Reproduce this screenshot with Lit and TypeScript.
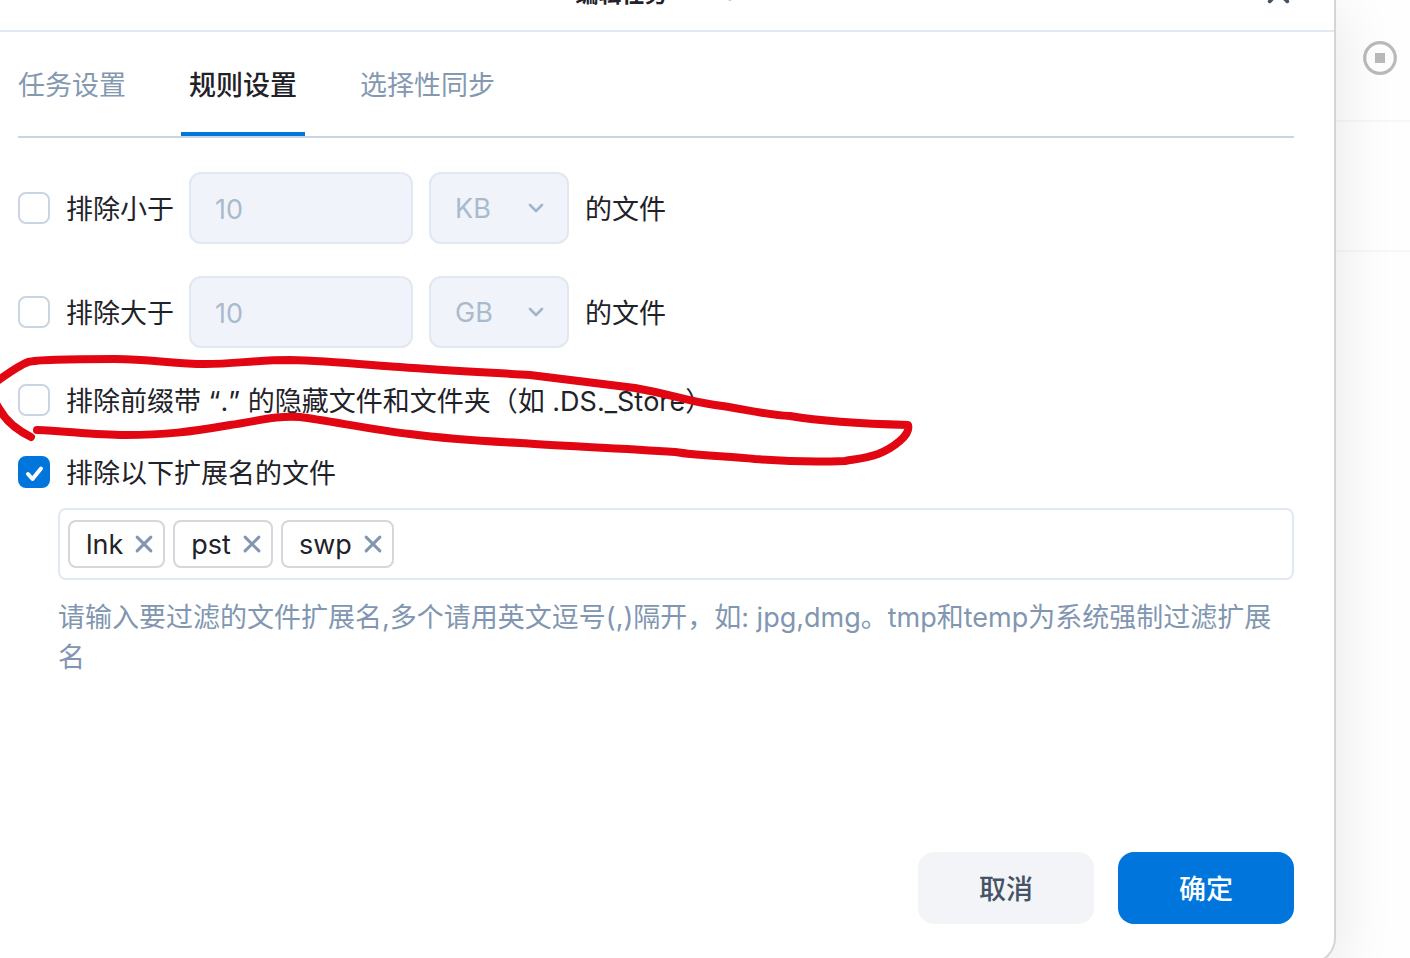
import { LitElement, html, css, svg } from "lit";
import { customElement, state } from "lit/decorators.js";

interface SizeRule {
  id: string;
  label: string;
  unit: string;
}

const SIZE_RULES: SizeRule[] = [
  { id: "min-size", label: "排除小于", unit: "KB" },
  { id: "max-size", label: "排除大于", unit: "GB" },
];

const TABS = ["任务设置", "规则设置", "选择性同步"];

const cross = svg`<path d="M2 2 L15 15 M15 2 L2 15" />`;

@customElement("app-root")
export class AppRoot extends LitElement {
  @state() private activeTab = 1;
  @state() private extensions = ["lnk", "pst", "swp"];

  static styles = css`
    :host {
      display: block;
      height: 100vh;
      overflow: hidden;
      background: #fff;
      color: #1f2329;
      font: 400 27px/40px Inter, "Noto Sans CJK SC", sans-serif;
    }
    * {
      box-sizing: border-box;
    }
    button,
    input,
    select {
      font: inherit;
      color: inherit;
      margin: 0;
    }
    button {
      border: 0;
      padding: 0;
      background: none;
      cursor: pointer;
    }
    .page {
      display: grid;
      grid-template-columns: 1fr 74px;
    }
    .dialog {
      position: relative;
      z-index: 1;
      display: flex;
      flex-direction: column;
      min-height: calc(100vh + 6px);
      background: #fff;
      border-right: 2px solid #d4d5d6;
      border-bottom: 2px solid #d4d5d6;
      border-bottom-right-radius: 26px;
      box-shadow: 0 10px 60px rgba(0, 0, 0, 0.1);
    }
    .header {
      display: flex;
      align-items: flex-end;
      height: 32px;
      padding: 0 44px 20px 40px;
      border-bottom: 2px solid #e3e9f4;
      overflow: hidden;
    }
    .title {
      flex: 1;
      display: flex;
      justify-content: center;
      align-items: flex-end;
      gap: 60px;
      margin: 0;
      font-size: 23px;
      line-height: 32px;
      font-weight: 700;
    }
    .dot {
      width: 4px;
      height: 4px;
      margin-bottom: 9px;
      border-radius: 2px;
      background: #c5c7ca;
    }
    .close {
      display: flex;
      margin-bottom: 6px;
    }
    .close svg {
      width: 23px;
      height: 23px;
      fill: none;
      stroke: #465266;
      stroke-width: 2.8;
      stroke-linecap: round;
    }
    .body {
      flex: 1;
      display: flex;
      flex-direction: column;
      padding: 0 40px 0 18px;
    }
    .tabs {
      display: flex;
      gap: 47px;
      height: 106px;
      border-bottom: 2px solid #c9d5e2;
    }
    .tab {
      padding: 8px 8px 0;
      border-bottom: 4px solid transparent;
      color: #8498b0;
    }
    .tab:first-child {
      margin-left: -8px;
    }
    .tab.active {
      border-bottom-color: #0076dd;
      color: #1f2329;
      font-weight: 500;
    }
    .rules {
      display: flex;
      flex-direction: column;
      gap: 32px;
      padding-top: 34px;
    }
    .size-rule {
      display: grid;
      grid-template-columns: 155px 224px 140px 1fr;
      align-items: center;
      gap: 16px;
    }
    .check {
      display: flex;
      align-items: center;
      gap: 16px;
      height: 40px;
      white-space: nowrap;
    }
    .text {
      padding-top: 3px;
      font-kerning: none;
      font-feature-settings: "calt" 0;
    }
    .box {
      position: relative;
      display: flex;
      width: 32px;
      height: 32px;
    }
    .box input {
      appearance: none;
      width: 32px;
      height: 32px;
      border: 2px solid #cad5e2;
      border-radius: 8px;
      background: #fff;
    }
    .box input:checked {
      border-color: #0076dd;
      background: #0076dd;
    }
    .box svg {
      position: absolute;
      inset: 0;
      width: 32px;
      height: 32px;
      fill: none;
      stroke: #fff;
      stroke-width: 4;
      stroke-linecap: round;
      stroke-linejoin: round;
      pointer-events: none;
      visibility: hidden;
    }
    .box input:checked + svg {
      visibility: visible;
    }
    .field {
      width: 100%;
      height: 72px;
      padding: 2px 24px 0;
      border: 2px solid #e1e8f1;
      border-radius: 12px;
      background: #f0f3f9;
      color: #a9bacd;
      opacity: 1;
      appearance: none;
    }
    .field::placeholder {
      color: #a9bacd;
      opacity: 1;
    }
    .select {
      position: relative;
    }
    .select .field {
      display: block;
    }
    .select svg {
      position: absolute;
      right: 25px;
      top: 30px;
      width: 16px;
      height: 12px;
      fill: none;
      stroke: #a3b5ca;
      stroke-width: 2.6;
      stroke-linecap: round;
      stroke-linejoin: round;
      pointer-events: none;
    }
    .flags {
      display: flex;
      flex-direction: column;
      gap: 32px;
    }
    .extensions {
      margin-left: 40px;
      padding-top: 16px;
    }
    .tag-box {
      display: flex;
      gap: 8px;
      padding: 10px 8px;
      border: 2px solid #e3e9f4;
      border-radius: 8px;
    }
    .tag {
      display: flex;
      align-items: center;
      gap: 12px;
      height: 48px;
      padding: 2px 10px 0 16px;
      border: 2px solid #d6d7dc;
      border-radius: 8px;
    }
    .tag button {
      display: flex;
      padding-bottom: 2px;
    }
    .tag svg {
      width: 18px;
      height: 18px;
      fill: none;
      stroke: #8196b0;
      stroke-width: 2.8;
      stroke-linecap: round;
    }
    .tag-input {
      flex: 1;
      min-width: 0;
      padding: 0;
      border: 0;
      outline: 0;
      background: transparent;
    }
    .hint {
      margin: 0;
      padding-top: 18px;
      color: #8196b0;
    }
    .footer {
      display: flex;
      justify-content: flex-end;
      gap: 24px;
      margin-top: auto;
      padding: 40px 0 38px;
    }
    .action {
      width: 176px;
      height: 72px;
      padding-top: 3px;
      border-radius: 16px;
      background: #f2f4f7;
      color: #465266;
      font-weight: 500;
    }
    .action.primary {
      background: #0076dd;
      color: #fff;
    }
    .list {
      display: flex;
      flex-direction: column;
      background: #fefefe;
    }
    .list-item {
      display: flex;
      justify-content: center;
      height: 130px;
      border-bottom: 2px solid #f5f6f7;
    }
    .list-item:first-child {
      height: 122px;
      padding: 40px 0 0 14px;
    }
    .stop {
      width: 36px;
      height: 36px;
    }
    .stop svg {
      display: block;
      width: 36px;
      height: 36px;
    }
    .marker {
      position: absolute;
      left: 0;
      top: 340px;
      width: 930px;
      height: 140px;
      fill: none;
      stroke: #e20613;
      stroke-width: 8;
      stroke-linecap: round;
      stroke-linejoin: round;
      pointer-events: none;
    }
  `;

  private removeExtension(name: string) {
    this.extensions = this.extensions.filter((item) => item !== name);
  }

  private renderCheck(label: string, checked = false) {
    return html`<label class="check">
      <span class="box">
        <input type="checkbox" .checked=${checked} />
        <svg viewBox="0 0 32 32" aria-hidden="true"><path d="M10 18 L14.5 23 L23 12.5" /></svg>
      </span>
      <span class="text">${label}</span>
    </label>`;
  }

  private renderSizeRule(rule: SizeRule) {
    return html`<div class="size-rule">
      ${this.renderCheck(rule.label)}
      <input class="field" id=${rule.id} type="text" placeholder="10" aria-label=${rule.label} disabled />
      <div class="select">
        <select class="field" aria-label="单位" disabled>
          <option>${rule.unit}</option>
        </select>
        <svg viewBox="0 0 16 12" aria-hidden="true"><path d="M2 3 L8 9 L14 3" /></svg>
      </div>
      <span class="text">的文件</span>
    </div>`;
  }

  render() {
    return html`<div class="page">
      <section class="dialog" role="dialog" aria-labelledby="title">
        <header class="header">
          <h1 class="title" id="title"><span>编辑任务</span><span class="dot"></span></h1>
          <button class="close" aria-label="关闭">
            <svg viewBox="0 0 17 17">${cross}</svg>
          </button>
        </header>
        <div class="body">
          <nav class="tabs" role="tablist">
            ${TABS.map(
              (tab, index) => html`<button
                class="tab ${index === this.activeTab ? "active" : ""}"
                role="tab"
                aria-selected=${index === this.activeTab}
                @click=${() => (this.activeTab = index)}
              >${tab}</button>`
            )}
          </nav>
          <div class="rules">
            ${SIZE_RULES.map((rule) => this.renderSizeRule(rule))}
            <div class="flags">
              ${this.renderCheck("排除前缀带 “.” 的隐藏文件和文件夹（如 .DS._Store）")}
              ${this.renderCheck("排除以下扩展名的文件", true)}
            </div>
          </div>
          <div class="extensions">
            <div class="tag-box">
              ${this.extensions.map(
                (name) => html`<span class="tag">
                  <span>${name}</span>
                  <button aria-label="移除 ${name}" @click=${() => this.removeExtension(name)}>
                    <svg viewBox="0 0 17 17">${cross}</svg>
                  </button>
                </span>`
              )}
              <input class="tag-input" type="text" aria-label="文件扩展名" />
            </div>
            <p class="hint">请输入要过滤的文件扩展名,多个请用英文逗号(,)隔开，如: jpg,dmg。tmp和temp为系统强制过滤扩展名</p>
          </div>
          <footer class="footer">
            <button class="action">取消</button>
            <button class="action primary">确定</button>
          </footer>
        </div>
        <svg class="marker" viewBox="0 0 930 140" aria-hidden="true">
          <path
            d="M31 97 C19 91 6 81 0 70 C-10 55 -10 45 0 39 C10 32 20 25 28 22 C40 19 80 19 115 19 C150 19 175 24 205 24 C235 24 255 20 290 20 C330 21 370 25 400 27 C450 31 500 33 530 35 C565 39 600 44 635 48 C670 54 690 62 715 65 C740 68 765 75 790 76 C820 81 870 84 908 85 C911 95 893 108 878 114 C864 119 855 119 845 121 C820 122 780 121 755 119 C730 116 700 116 675 112 C620 108 560 106 520 103 C480 101 440 98 410 94 C375 90 330 81 300 77 C275 75 255 82 230 85 C190 92 165 95 125 95 C95 95 65 91 37 90"
          />
        </svg>
      </section>
      <aside class="list">
        <div class="list-item">
          <button class="stop" aria-label="停止">
            <svg viewBox="0 0 36 36">
              <circle cx="18" cy="18" r="15.3" fill="none" stroke="#bababa" stroke-width="3.2" />
              <rect x="13" y="13" width="10" height="10" fill="#bababa" />
            </svg>
          </button>
        </div>
        <div class="list-item"></div>
      </aside>
    </div>`;
  }
}
